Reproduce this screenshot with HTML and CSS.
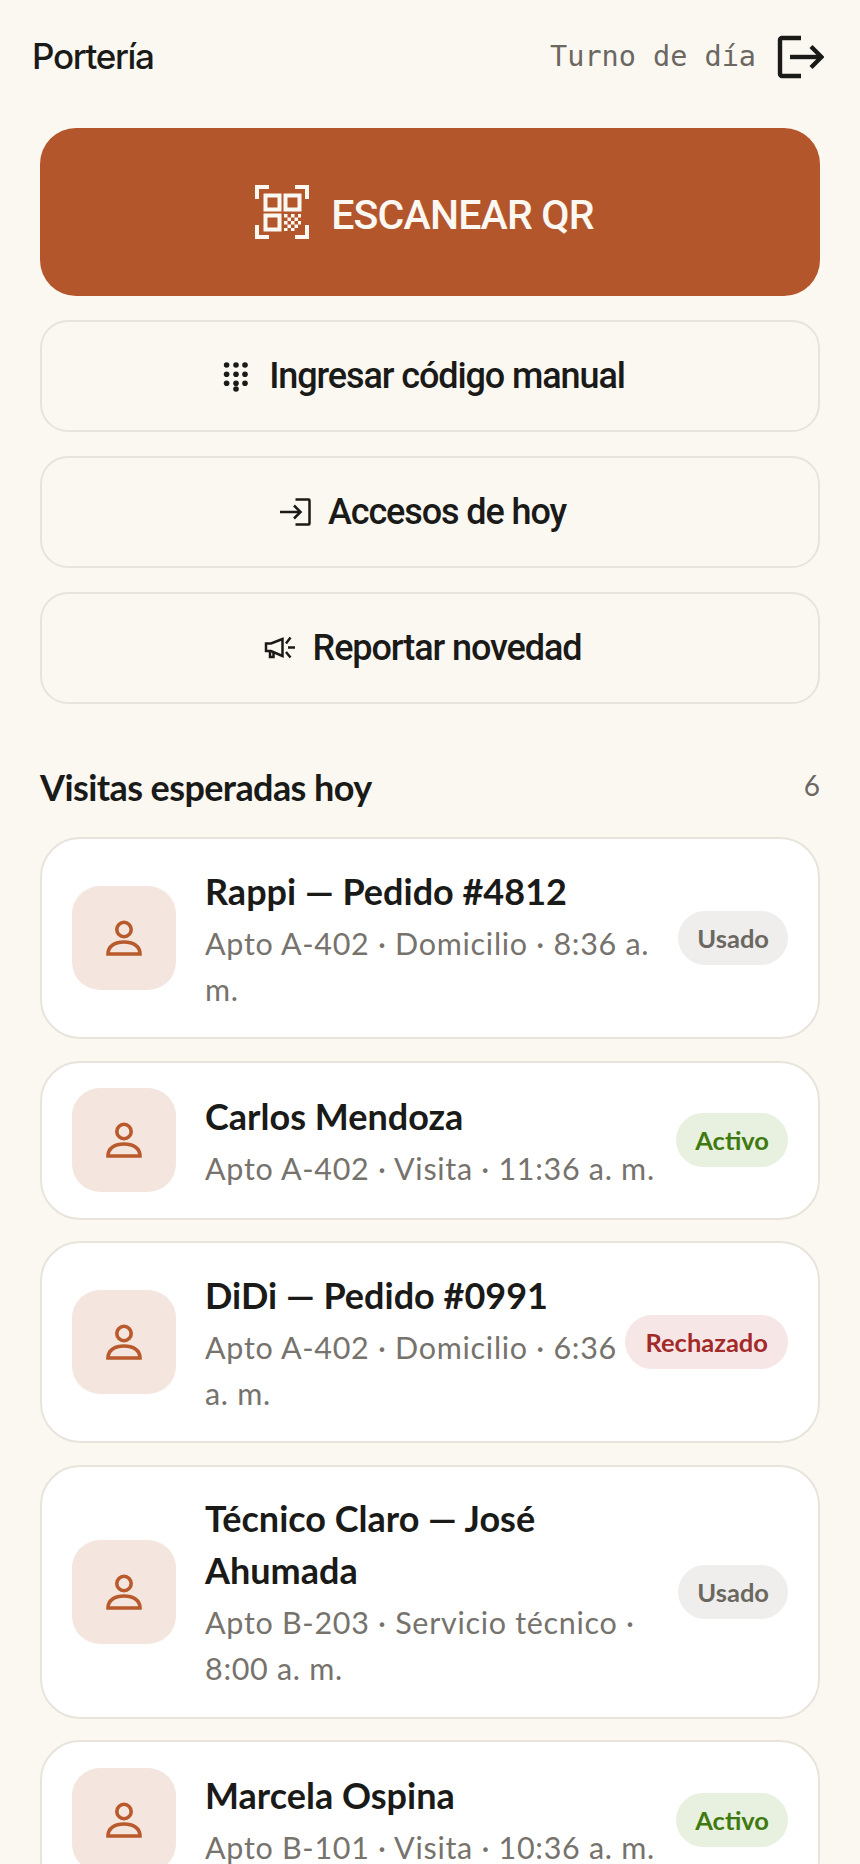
FILE: index.html
```html
<!DOCTYPE html>
<html lang="es">
<head>
    <meta charset="UTF-8">
    <meta name="viewport" content="width=device-width, initial-scale=1.0">
    <title>Portería</title>
    <link rel="stylesheet" href="styles.css">
</head>

<body>
    <header class="topbar">
        <h1 class="topbar-title">Portería</h1>
        <div class="topbar-side">
            <span class="shift">Turno de día</span>
            <svg class="logout" viewBox="0 0 48 48" fill="none" stroke="#1a1a18" stroke-width="4.4">
                <path d="M25 5H6a2 2 0 0 0-2 2v34a2 2 0 0 0 2 2h19"/>
                <path d="M14 24h31"/>
                <path d="M35 13.5 45.5 24 35 34.5"/>
            </svg>
        </div>
    </header>

    <main class="content">
        <!-- Acciones -->
        <section class="actions">
            <button class="btn btn-primary">
                <svg class="btn-qr" viewBox="0 0 54 54" fill="none" stroke="#fbf8f2" stroke-width="4">
                    <path d="M14 2H2V14"/>
                    <path d="M40 2h12V14"/>
                    <path d="M2 40v12H14"/>
                    <path d="M52 40v12H40"/>
                    <rect x="10.5" y="10.5" width="14" height="14"/>
                    <rect x="30.5" y="10.5" width="14" height="14"/>
                    <rect x="10.5" y="30.5" width="14" height="14"/>
                    <path fill="#fbf8f2" stroke="none" d="M29 29h3.500v3.500H29zM36 29h3.500v3.500H36zM43 29h3v3.500h-3zM32.500 32.500H36V36h-3.500zM39.500 32.500H43V36h-3.500zM29 36h3.500v3.500H29zM36 36h3.500v3.500H36zM43 36h3v3.500h-3zM32.500 39.500H36V43h-3.500zM39.500 39.500H43V43h-3.500zM29 43h3.500v3H29zM36 43h3.500v3H36z"/>
                </svg>
                <span class="btn-primary-label">ESCANEAR QR</span>
            </button>
            <button class="btn btn-outline">
                <svg class="btn-icon" viewBox="0 0 32 32" fill="#1a1a18">
                    <circle cx="6.600" cy="5" r="2.800"/><circle cx="16" cy="5" r="2.800"/><circle cx="25" cy="5" r="2.800"/>
                    <circle cx="6.600" cy="14.300" r="2.800"/><circle cx="16" cy="14.300" r="2.800"/><circle cx="25" cy="14.300" r="2.800"/>
                    <circle cx="6.600" cy="23.300" r="2.800"/><circle cx="16" cy="23.300" r="2.800"/><circle cx="25" cy="23.300" r="2.800"/>
                    <circle cx="16" cy="29" r="2.800"/>
                </svg>
                Ingresar código manual
            </button>
            <button class="btn btn-outline">
                <svg class="btn-icon" viewBox="0 0 32 32" fill="none" stroke="#1a1a18" stroke-width="2.500">
                    <path d="M16.500 3.500H29.500a1 1 0 0 1 1 1v23a1 1 0 0 1-1 1H16.500"/>
                    <path d="M1 16h20"/>
                    <path d="M15 9.500 21.500 16 15 22.500"/>
                </svg>
                Accesos de hoy
            </button>
            <button class="btn btn-outline">
                <svg class="btn-icon" viewBox="0 0 32 32" fill="none" stroke="#1a1a18" stroke-width="2.500">
                    <path d="M18.500 7 7 11.500H2v7.500h5L18.500 24z"/>
                    <path d="M6 19v6h3.500v-5"/>
                    <path d="M22 11.500 26.500 5.500"/>
                    <path d="M22 20 26.500 25.500"/>
                    <path d="M24 15.500h7"/>
                </svg>
                Reportar novedad
            </button>
        </section>

        <!-- Visitas -->
        <section class="visits">
            <div class="visits-head">
                <h2>Visitas esperadas hoy</h2>
                <span class="visits-count">6</span>
            </div>

            <article class="visit">
                <div class="visit-tile">
                    <svg class="person" viewBox="0 0 40 40" fill="none" stroke="#b85a2c" stroke-width="3.600"><circle cx="20" cy="11.500" r="7.200"/><path d="M4 36C4 28 11 24 20 24s16 4 16 12z"/></svg>
                </div>
                <div class="visit-info">
                    <h3>Rappi — Pedido #4812</h3>
                    <p>Apto A-402 · Domicilio · 8:36 a. m.</p>
                </div>
                <span class="badge badge-used">Usado</span>
            </article>

            <article class="visit">
                <div class="visit-tile">
                    <svg class="person" viewBox="0 0 40 40" fill="none" stroke="#b85a2c" stroke-width="3.600"><circle cx="20" cy="11.500" r="7.200"/><path d="M4 36C4 28 11 24 20 24s16 4 16 12z"/></svg>
                </div>
                <div class="visit-info">
                    <h3>Carlos Mendoza</h3>
                    <p>Apto A-402 · Visita · 11:36 a. m.</p>
                </div>
                <span class="badge badge-active">Activo</span>
            </article>

            <article class="visit">
                <div class="visit-tile">
                    <svg class="person" viewBox="0 0 40 40" fill="none" stroke="#b85a2c" stroke-width="3.600"><circle cx="20" cy="11.500" r="7.200"/><path d="M4 36C4 28 11 24 20 24s16 4 16 12z"/></svg>
                </div>
                <div class="visit-info">
                    <h3>DiDi — Pedido #0991</h3>
                    <p>Apto A-402 · Domicilio · 6:36 a. m.</p>
                </div>
                <span class="badge badge-rejected">Rechazado</span>
            </article>

            <article class="visit">
                <div class="visit-tile">
                    <svg class="person" viewBox="0 0 40 40" fill="none" stroke="#b85a2c" stroke-width="3.600"><circle cx="20" cy="11.500" r="7.200"/><path d="M4 36C4 28 11 24 20 24s16 4 16 12z"/></svg>
                </div>
                <div class="visit-info">
                    <h3>Técnico Claro — José Ahumada</h3>
                    <p>Apto B-203 · Servicio técnico · 8:00 a. m.</p>
                </div>
                <span class="badge badge-used">Usado</span>
            </article>

            <article class="visit">
                <div class="visit-tile">
                    <svg class="person" viewBox="0 0 40 40" fill="none" stroke="#b85a2c" stroke-width="3.600"><circle cx="20" cy="11.500" r="7.200"/><path d="M4 36C4 28 11 24 20 24s16 4 16 12z"/></svg>
                </div>
                <div class="visit-info">
                    <h3>Marcela Ospina</h3>
                    <p>Apto B-101 · Visita · 10:36 a. m.</p>
                </div>
                <span class="badge badge-active">Activo</span>
            </article>
        </section>
    </main>
</body>
</html>
```

FILE: styles.css
```css
* {
    margin: 0;
    padding: 0;
    box-sizing: border-box;
}

html,
body {
    height: 1864px;
    overflow: hidden;
}

body {
    background-color: #fbf8f2;
    color: #1a1a18;
    font-family: "Lato", sans-serif;
}

/* Topbar */
.topbar {
    display: flex;
    justify-content: space-between;
    align-items: center;
    height: 114px;
    padding: 0 36px 0 32px;
}

.topbar-title {
    font-family: "Inter", sans-serif;
    font-size: 35px;
    font-weight: 550;
    letter-spacing: -1.35px;
    margin-top: -2px;
}

.topbar-side {
    display: flex;
    align-items: center;
    gap: 20px;
}

.shift {
    font-family: "DejaVu Sans Mono", monospace;
    font-size: 28.5px;
    color: #6b6862;
    margin-top: -2px;
}

.logout {
    width: 48px;
    height: 48px;
}

/* Acciones */
.content {
    padding: 14px 40px 0;
}

.actions {
    display: flex;
    flex-direction: column;
    gap: 24px;
}

.btn {
    display: flex;
    justify-content: center;
    align-items: center;
    font-family: "Roboto", sans-serif;
    font-weight: 500;
    cursor: pointer;
    padding-right: 13px;
}

.btn-primary {
    height: 168px;
    gap: 22px;
    padding-right: 11px;
    background-color: #b4562c;
    color: #fbf8f2;
    border: none;
    border-radius: 36px;
    font-size: 41px;
    letter-spacing: -0.8px;
}

.btn-primary-label {
    margin-top: 5px;
}

.btn-qr {
    width: 54px;
    height: 54px;
}

.btn-outline {
    height: 112px;
    gap: 17px;
    padding-right: 15px;
    background-color: transparent;
    color: #1a1a18;
    border: 2px solid #e8e4dc;
    border-radius: 28px;
    font-size: 36px;
    font-weight: 500;
    letter-spacing: -1.1px;
}

.btn-icon {
    width: 32px;
    height: 32px;
}

/* Visitas */
.visits {
    margin-top: 58px;
}

.visits-head {
    display: flex;
    justify-content: space-between;
    align-items: center;
    height: 50px;
    margin-bottom: 25px;
}

.visits-head h2 {
    font-size: 36px;
    font-weight: 700;
    letter-spacing: -0.6px;
}

.visits-count {
    font-size: 28px;
    color: #6b6862;
    margin-top: -4px;
}

.visit {
    display: flex;
    align-items: center;
    gap: 6px;
    padding: 25.5px 30px;
    margin-bottom: 21.5px;
    background-color: #ffffff;
    border: 2px solid #e8e4dc;
    border-radius: 40px;
}

.visit-tile {
    display: flex;
    justify-content: center;
    align-items: center;
    flex-shrink: 0;
    width: 104px;
    height: 104px;
    margin-right: 23px;
    background-color: #f4e6de;
    border-radius: 28px;
}

.person {
    width: 40px;
    height: 40px;
}

.visit-info {
    flex: 1;
    min-width: 0;
}

.visit-info h3 {
    font-size: 36px;
    font-weight: 700;
    line-height: 52px;
}

.visit-info p {
    margin-top: 3px;
    font-size: 30.5px;
    line-height: 46px;
    color: #76726c;
    letter-spacing: 0.7px;
}

.badge {
    flex-shrink: 0;
    height: 54px;
    padding: 0 19px;
    border-radius: 27px;
    font-size: 25.5px;
    font-weight: 700;
    line-height: 54px;
}

.badge-used {
    background-color: #efeeec;
    color: #6b6862;
}

.badge-active {
    background-color: #e8f0e0;
    color: #3f7a10;
}

.badge-rejected {
    padding: 0 20px;
    background-color: #f7e6e6;
    color: #a32a2a;
}
```
